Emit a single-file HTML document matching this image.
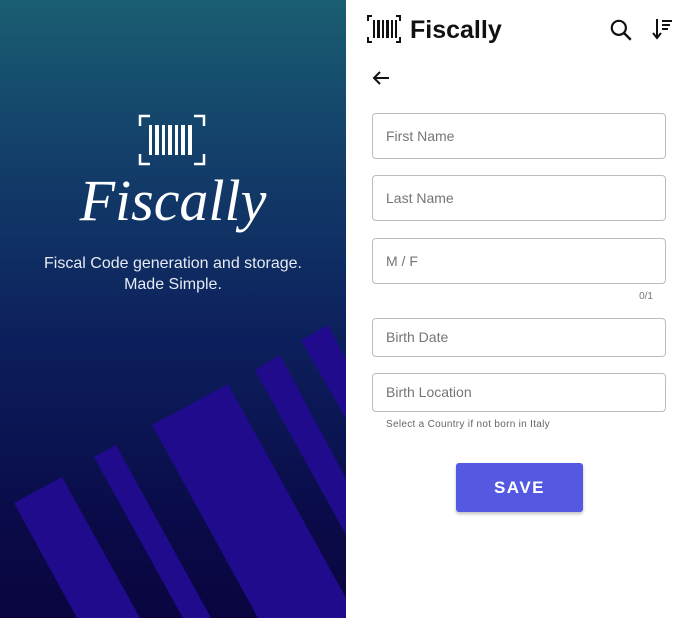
<!DOCTYPE html>
<html><head><style>
*{margin:0;padding:0;box-sizing:border-box}
body{width:691px;height:618px;overflow:hidden;background:#fff;font-family:"Liberation Sans",sans-serif;position:relative}
#left{position:absolute;left:0;top:0;width:346px;height:618px;overflow:hidden;background:linear-gradient(180deg,#1a5e72 0%,#133f6a 25%,#0c1f5c 55%,#0a0a48 85%,#0a0540 100%)}
.f{position:absolute;left:372px;width:294px;border:1.5px solid #bdbdbd;border-radius:4px;color:#757575;font-size:14px;padding-left:13px}
</style></head><body>
<div id="left">
<svg width="346" height="618" style="position:absolute;left:0;top:0">
<g fill="#1f0b8c">
<polygon points="14,503 62,477 140,618 77,618"/>
<polygon points="94,457 116,445 211,618 183,618"/>
<polygon points="152,425 228,384 357,618 258,618"/>
<polygon points="255,370 280,355 420,618 392,618"/>
<polygon points="301,340 328,325 480,618 460,618"/>
</g>
<g fill="none" stroke="#fff" stroke-width="2.5">
<path d="M150,116 H140 V126 M194,116 H204 V126 M140,154 V164 H150 M204,154 V164 H194"/>
</g>
<g fill="#fff">
<rect x="149" y="125" width="3" height="30"/><rect x="155" y="125" width="4" height="30"/><rect x="162" y="125" width="3" height="30"/><rect x="168" y="125" width="4" height="30"/><rect x="175" y="125" width="3" height="30"/><rect x="181" y="125" width="4" height="30"/><rect x="188" y="125" width="4" height="30"/>
</g>
</svg>
<div style="position:absolute;left:0;width:346px;top:166px;text-align:center;color:#fff;font-family:'Liberation Serif',serif;font-style:italic;font-size:58px;line-height:70px">Fiscally</div>
<div style="position:absolute;left:0;width:346px;top:253px;text-align:center;color:#e6eaf2;font-size:16px;line-height:21px">Fiscal Code generation and storage.<br>Made Simple.</div>
</div>
<svg width="40" height="32" style="position:absolute;left:366px;top:13px" viewBox="0 0 40 32">
<g fill="none" stroke="#111" stroke-width="2"><path d="M6,3 H2 V8 M30,3 H34 V8 M2,24 V29 H6 M34,24 V29 H30"/></g>
<g fill="#111"><rect x="7" y="7" width="2" height="18"/><rect x="11" y="7" width="3" height="18"/><rect x="16" y="7" width="2" height="18"/><rect x="20" y="7" width="3" height="18"/><rect x="25" y="7" width="2" height="18"/><rect x="29" y="7" width="2" height="18"/></g>
</svg>
<div style="position:absolute;left:410px;top:16px;font-size:25px;font-weight:bold;color:#111">Fiscally</div>
<svg width="26" height="26" style="position:absolute;left:608px;top:17px" viewBox="0 0 24 24"><circle cx="10" cy="10" r="6.5" fill="none" stroke="#111" stroke-width="2"/><path d="M15,15 L21,21" stroke="#111" stroke-width="2.2"/></svg>
<svg width="22" height="24" style="position:absolute;left:652px;top:17px" viewBox="0 0 22 24"><path d="M5,2 V20 M1,16 L5,21 L9,16" fill="none" stroke="#111" stroke-width="2"/><path d="M10,4 H20 M10,8 H18 M10,12 H16" stroke="#111" stroke-width="2"/></svg>
<svg width="20" height="16" style="position:absolute;left:371px;top:70px" viewBox="0 0 20 16"><path d="M18,8 H3 M9,2 L3,8 L9,14" fill="none" stroke="#111" stroke-width="2"/></svg>
<div class="f" style="top:113px;height:46px;line-height:44px">First Name</div>
<div class="f" style="top:175px;height:46px;line-height:44px">Last Name</div>
<div class="f" style="top:238px;height:46px;line-height:44px">M / F</div>
<div style="position:absolute;left:620px;width:33px;text-align:right;top:291px;font-size:10px;color:#757575">0/1</div>
<div class="f" style="top:318px;height:39px;line-height:37px">Birth Date</div>
<div class="f" style="top:373px;height:39px;line-height:37px">Birth Location</div>
<div style="position:absolute;left:386px;top:419px;font-size:10px;color:#666;letter-spacing:0.3px">Select a Country if not born in Italy</div>
<div style="position:absolute;left:456px;top:463px;width:127px;height:49px;background:#5558e0;border-radius:3px;box-shadow:0 2px 3px rgba(0,0,0,.25);color:#fff;font-size:17px;font-weight:bold;letter-spacing:1.5px;text-align:center;line-height:49px">SAVE</div>
</body></html>
